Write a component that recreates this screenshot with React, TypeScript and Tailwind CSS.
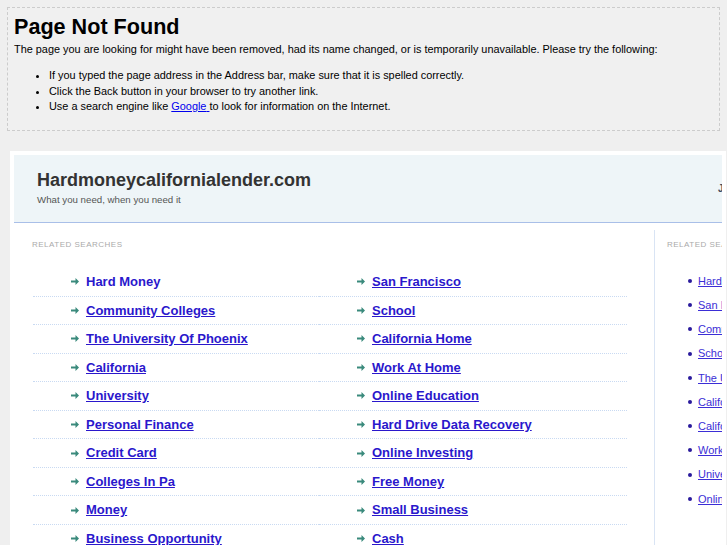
import React from "react"

const leftCol = [
  "Hard Money",
  "Community Colleges",
  "The University Of Phoenix",
  "California",
  "University",
  "Personal Finance",
  "Credit Card",
  "Colleges In Pa",
  "Money",
  "Business Opportunity",
]

const rightCol = [
  "San Francisco",
  "School",
  "California Home",
  "Work At Home",
  "Online Education",
  "Hard Drive Data Recovery",
  "Online Investing",
  "Free Money",
  "Small Business",
  "Cash",
]

const sidebar = [
  "Hard Money",
  "San Francisco",
  "Community Colleges",
  "School",
  "The University of Phoenix",
  "California",
  "California Home",
  "Work At Home",
  "University",
  "Online Education",
]

function Arrow() {
  return (
    <svg width="8" height="7" viewBox="0 0 8 7" className="shrink-0">
      <path d="M0 2.5h4.5V0L8 3.5 4.5 7V4.5H0z" fill="#3a8a7c" />
    </svg>
  )
}

function Row({ label, first }: { label: string; first?: boolean }) {
  return (
    <li className="h-[28.56px] border-b border-dotted border-[#c9daf2] pl-[38px] flex items-center gap-[7px]">
      <Arrow />
      <a
        href="#"
        className={`text-[13px] font-bold text-[#2a17cc] ${first ? "no-underline" : "underline"}`}
      >
        {label}
      </a>
    </li>
  )
}

export default function App() {
  return (
    <div className="h-[545px] overflow-hidden bg-[#efefef] font-['Liberation_Sans',Arial,sans-serif] text-black">
      {/* Error box */}
      <div className="mx-[7px] mt-[7px] h-[124px] border border-dashed border-[#cccccc] bg-[#f0f0f0] px-[6px] pt-[6px]">
        <h1 className="text-[21.6px] font-bold leading-[26px]">Page Not Found</h1>
        <p className="mt-[2px] text-[10.9px] leading-[14px]">
          The page you are looking for might have been removed, had its name changed, or is temporarily unavailable. Please try the following:
        </p>
        <ul className="mt-[12px] list-disc pl-[35px] text-[10.9px] leading-[15.5px]">
          <li>If you typed the page address in the Address bar, make sure that it is spelled correctly.</li>
          <li>Click the Back button in your browser to try another link.</li>
          <li>
            Use a search engine like{" "}
            <a href="#" className="text-[#0000ee] underline">
              Google{" "}
            </a>
            to look for information on the Internet.
          </li>
        </ul>
      </div>

      {/* Parked page panel */}
      <div className="ml-[10px] mr-[1px] mt-[20px] h-[400px] overflow-hidden bg-white px-[4px] pt-[4px]">
        <div className="relative h-[68px] overflow-hidden border-b border-[#a9bfe8] bg-[#eef5f8] pl-[23px] pt-[14px]">
          <div className="text-[18px] font-bold leading-[22px] text-[#333333]">Hardmoneycalifornialender.com</div>
          <div className="mt-[3px] text-[9.7px] leading-[12px] text-[#555555]">What you need, when you need it</div>
          <span className="absolute left-[704px] top-[26px] text-[10px] font-bold text-[#3d4a5a]">J</span>
        </div>

        <div className="flex">
          <div className="mt-[7px] w-[641px] shrink-0 border-r border-[#d9e4f4] pt-[10px]">
            <div className="pl-[18px] text-[8px] uppercase leading-[10px] tracking-[0.5px] text-[#aaaaaa]">Related Searches</div>
            <div className="ml-[19px] mt-[18px] grid grid-cols-[286px_308px]">
              <ul>
                {leftCol.map((l, i) => (
                  <Row key={l} label={l} first={i === 0} />
                ))}
              </ul>
              <ul>
                {rightCol.map((l) => (
                  <Row key={l} label={l} />
                ))}
              </ul>
            </div>
          </div>

          <div className="min-w-0 flex-1 overflow-hidden pt-[17px] pl-[12px]">
            <div className="whitespace-nowrap text-[8px] uppercase leading-[10px] tracking-[0.5px] text-[#aaaaaa]">Related Searches</div>
            <ul className="mt-[19px] pl-[21px]">
              {sidebar.map((l) => (
                <li key={l} className="flex h-[24.2px] items-center gap-[6px] whitespace-nowrap">
                  <span className="h-[4px] w-[4px] shrink-0 rounded-full bg-[#2a1a9c]" />
                  <a href="#" className="text-[11px] text-[#3b2ed6] underline">
                    {l}
                  </a>
                </li>
              ))}
            </ul>
          </div>
        </div>
      </div>
    </div>
  )
}
